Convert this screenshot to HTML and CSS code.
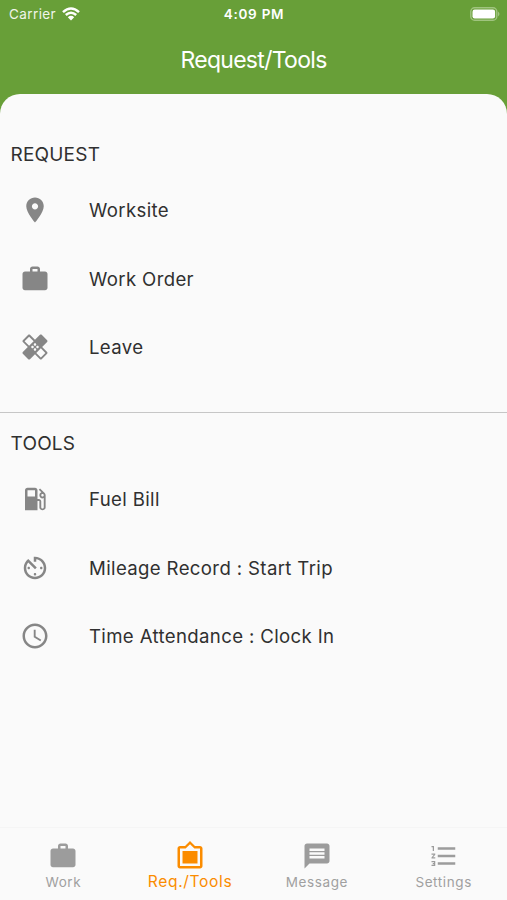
FILE: index.html
```html
<!DOCTYPE html>
<html lang="en">
<head>
<meta charset="utf-8">
<title>Request/Tools</title>
<link rel="stylesheet" href="styles.css">
</head>
<body>
<div class="app">
  <header class="header">
    <div class="status">
      <div class="carrier"><span>Carrier</span>
        <svg class="wifi" viewBox="0 0 18 14"><path d="M1 5.2Q9-2.2 17 5.2" /><path d="M3.8 8Q9 3.4 14.2 8"/><path class="dot" d="M5.8 10.2Q9 7.4 12.2 10.2L9 13.6Z"/></svg>
      </div>
      <div class="time">4:09 PM</div>
      <div class="power"><svg class="battery" viewBox="0 0 30 14"><rect class="shell" x=".8" y=".8" width="26" height="12.4" rx="3.8"/><rect class="charge" x="2.5" y="2.5" width="22.6" height="9" rx="2.2"/><path class="tip" d="M28 4.5q3 2.5 0 5z"/></svg></div>
    </div>
    <h1 class="title">Request/Tools</h1>
  </header>
  <main class="sheet">
    <section class="group request">
      <h2 class="heading">REQUEST</h2>
      <div class="row"><svg class="icon" viewBox="0 0 24 24"><path d="M12 2C8.13 2 5 5.13 5 9c0 5.25 7 13 7 13s7-7.75 7-13c0-3.87-3.13-7-7-7zm0 9.5c-1.38 0-2.5-1.12-2.5-2.5s1.12-2.5 2.5-2.5 2.5 1.12 2.5 2.5-1.12 2.5-2.5 2.5z"/></svg><span>Worksite</span></div>
      <div class="row"><svg class="icon" viewBox="0 0 24 24"><path d="M20 6h-4V4c0-1.11-.89-2-2-2h-4c-1.11 0-2 .89-2 2v2H4c-1.11 0-1.99.89-1.99 2L2 19c0 1.11.89 2 2 2h16c1.11 0 2-.89 2-2V8c0-1.11-.89-2-2-2zm-6 0h-4V4h4v2z"/></svg><span>Work Order</span></div>
      <div class="row"><svg class="icon" viewBox="0 0 24 24"><path d="M17.73 12.02l3.98-3.98c.39-.39.39-1.02 0-1.41l-4.34-4.34c-.39-.39-1.02-.39-1.41 0l-3.98 3.98L8 2.29C7.8 2.1 7.55 2 7.29 2c-.25 0-.51.1-.7.29L2.25 6.63c-.39.39-.39 1.02 0 1.41l3.98 3.98L2.25 16c-.39.39-.39 1.02 0 1.41l4.34 4.34c.39.39 1.02.39 1.41 0l3.98-3.98 3.98 3.98c.2.2.45.29.71.29.26 0 .51-.1.71-.29l4.34-4.34c.39-.39.39-1.02 0-1.41l-3.99-3.98zM12 9c.55 0 1 .45 1 1s-.45 1-1 1-1-.45-1-1 .45-1 1-1zm-4.71 1.96L3.66 7.34l3.63-3.63 3.62 3.62-3.62 3.63zM10 13c-.55 0-1-.45-1-1s.45-1 1-1 1 .45 1 1-.45 1-1 1zm2 2c-.55 0-1-.45-1-1s.45-1 1-1 1 .45 1 1-.45 1-1 1zm2-4c.55 0 1 .45 1 1s-.45 1-1 1-1-.45-1-1 .45-1 1-1zm2.66 9.34l-3.63-3.62 3.63-3.63 3.62 3.62-3.62 3.63z"/></svg><span>Leave</span></div>
    </section>
    <section class="group tools">
      <h2 class="heading">TOOLS</h2>
      <div class="row"><svg class="icon" viewBox="0 0 24 24"><path d="M19.77 7.23l.01-.01-3.72-3.72L15 4.56l2.11 2.11c-.94.36-1.61 1.26-1.61 2.33 0 1.38 1.12 2.5 2.5 2.5.36 0 .69-.08 1-.21v7.21c0 .55-.45 1-1 1s-1-.45-1-1V14c0-1.1-.9-2-2-2h-1V5c0-1.1-.9-2-2-2H6c-1.1 0-2 .9-2 2v16h10v-7.5h1.5v5c0 1.38 1.12 2.5 2.5 2.5s2.5-1.12 2.5-2.5V9c0-.69-.28-1.32-.73-1.77zM12 10H6V5h6v5zm6 0c-.55 0-1-.45-1-1s.45-1 1-1 1 .45 1 1-.45 1-1 1z"/></svg><span>Fuel Bill</span></div>
      <div class="row"><svg class="icon" viewBox="0 0 24 24"><path d="M11 17c0 .55.45 1 1 1s1-.45 1-1-.45-1-1-1-1 .45-1 1zm0-14v4h2V5.08c3.39.49 6 3.39 6 6.92 0 3.87-3.13 7-7 7s-7-3.13-7-7c0-1.68.59-3.22 1.58-4.42L12 13l1.41-1.41-6.8-6.8v.02C4.42 6.45 3 9.05 3 12c0 4.97 4.02 9 9 9 4.97 0 9-4.03 9-9s-4.03-9-9-9h-1zm7 9c0-.55-.45-1-1-1s-1 .45-1 1 .45 1 1 1 1-.45 1-1zM6 12c0 .55.45 1 1 1s1-.45 1-1-.45-1-1-1-1 .45-1 1z"/></svg><span>Mileage Record : Start Trip</span></div>
      <div class="row"><svg class="icon" viewBox="0 0 24 24"><path d="M11.99 2C6.47 2 2 6.48 2 12s4.47 10 9.99 10C17.52 22 22 17.52 22 12S17.52 2 11.99 2zM12 20c-4.42 0-8-3.58-8-8s3.58-8 8-8 8 3.58 8 8-3.58 8-8 8zm.5-13H11v6l5.25 3.15.75-1.23-4.5-2.67z"/></svg><span>Time Attendance : Clock In</span></div>
    </section>
  </main>
  <nav class="tabs">
    <div class="tab"><svg class="icon" viewBox="0 0 24 24"><path d="M20 6h-4V4c0-1.11-.89-2-2-2h-4c-1.11 0-2 .89-2 2v2H4c-1.11 0-1.99.89-1.99 2L2 19c0 1.11.89 2 2 2h16c1.11 0 2-.89 2-2V8c0-1.11-.89-2-2-2zm-6 0h-4V4h4v2z"/></svg><span>Work</span></div>
    <div class="tab active"><svg class="icon" viewBox="0 0 24 24"><path d="M20 4h-4l-4-4-4 4H4c-1.1 0-2 .9-2 2v14c0 1.1.9 2 2 2h16c1.1 0 2-.9 2-2V6c0-1.1-.9-2-2-2zm0 16H4V6h4.52l3.52-3.5L15.52 6H20v14zM18 8H6v10h12"/></svg><span>Req./Tools</span></div>
    <div class="tab"><svg class="icon" viewBox="0 0 24 24"><path d="M20 2H4c-1.1 0-1.99.9-1.99 2L2 22l4-4h14c1.1 0 2-.9 2-2V4c0-1.1-.9-2-2-2zm-2 12H6v-2h12v2zm0-3H6V9h12v2zm0-3H6V6h12v2z"/></svg><span>Message</span></div>
    <div class="tab"><svg class="icon" viewBox="0 0 24 24"><path d="M2 17h2v.5H3v1h1v.5H2v1h3v-4H2v1zm1-9h1V4H2v1h1v3zm-1 3h1.8L2 13.1v.9h3v-1H3.2L5 10.9V10H2v1zm5-6v2h14V5H7zm0 14h14v-2H7v2zm0-6h14v-2H7v2z"/></svg><span>Settings</span></div>
  </nav>
</div>
</body>
</html>
```
FILE: styles.css
```css
* { box-sizing: border-box; }
body { margin: 0; font-family: Inter, "Liberation Sans", sans-serif; color: #303030; }
h1, h2 { margin: 0; font-weight: 400; }
svg { display: block; flex: none; }
.app { width: 507px; height: 900px; display: flex; flex-direction: column; background: #689f38; overflow: hidden; }
.header { height: 94px; flex: none; color: #fff; }
.status { height: 27px; padding: 0 7px 0 9px; display: grid; grid-template-columns: 1fr auto 1fr; align-items: center; font-size: 13.5px; }
.carrier { display: flex; align-items: center; gap: 6px; letter-spacing: .4px; color: #f0f5ea; }
.wifi { width: 18px; height: 14px; fill: none; stroke: #fff; stroke-width: 2.5; }
.wifi .dot { fill: #fff; stroke: none; }
.time { font-weight: 600; letter-spacing: .75px; margin-right: 1px; }
.power { display: flex; justify-content: flex-end; }
.battery { width: 30px; height: 14px; }
.shell { fill: none; stroke: #a0c47f; stroke-width: 1.4; }
.charge { fill: #fff; }
.tip { fill: #a0c47f; }
.title { height: 66px; line-height: 66px; text-align: center; font-size: 23px; letter-spacing: -.7px; }
.sheet { flex: 1; background: #fafafa; border-radius: 20px 20px 0 0; }
.request { height: 319px; padding-top: 47px; border-bottom: 1px solid #c6c6c6; }
.tools { padding-top: 17px; }
.heading { height: 27px; line-height: 27px; padding-left: 10.5px; font-size: 19px; letter-spacing: .2px; margin-bottom: 8px; }
.row { height: 68.4px; padding-left: 20px; display: flex; align-items: center; gap: 39px; font-size: 18.6px; letter-spacing: .36px; white-space: nowrap; }
.icon { width: 30px; height: 30px; fill: #868686; }
.tabs { height: 73px; flex: none; display: grid; grid-template-columns: repeat(4, 1fr); background: #fafafa; border-top: 1px solid #f5f5f5; }
.tab { display: flex; flex-direction: column; align-items: center; padding-top: 12.5px; font-size: 13.5px; line-height: 22px; letter-spacing: .6px; color: #a0a0a0; }
.tab .icon { fill: #9c9c9c; }
.tab.active { color: #fb8c00; font-size: 15.6px; line-height: 21px; letter-spacing: .65px; }
.tab.active .icon { fill: #fb8c00; }
```
